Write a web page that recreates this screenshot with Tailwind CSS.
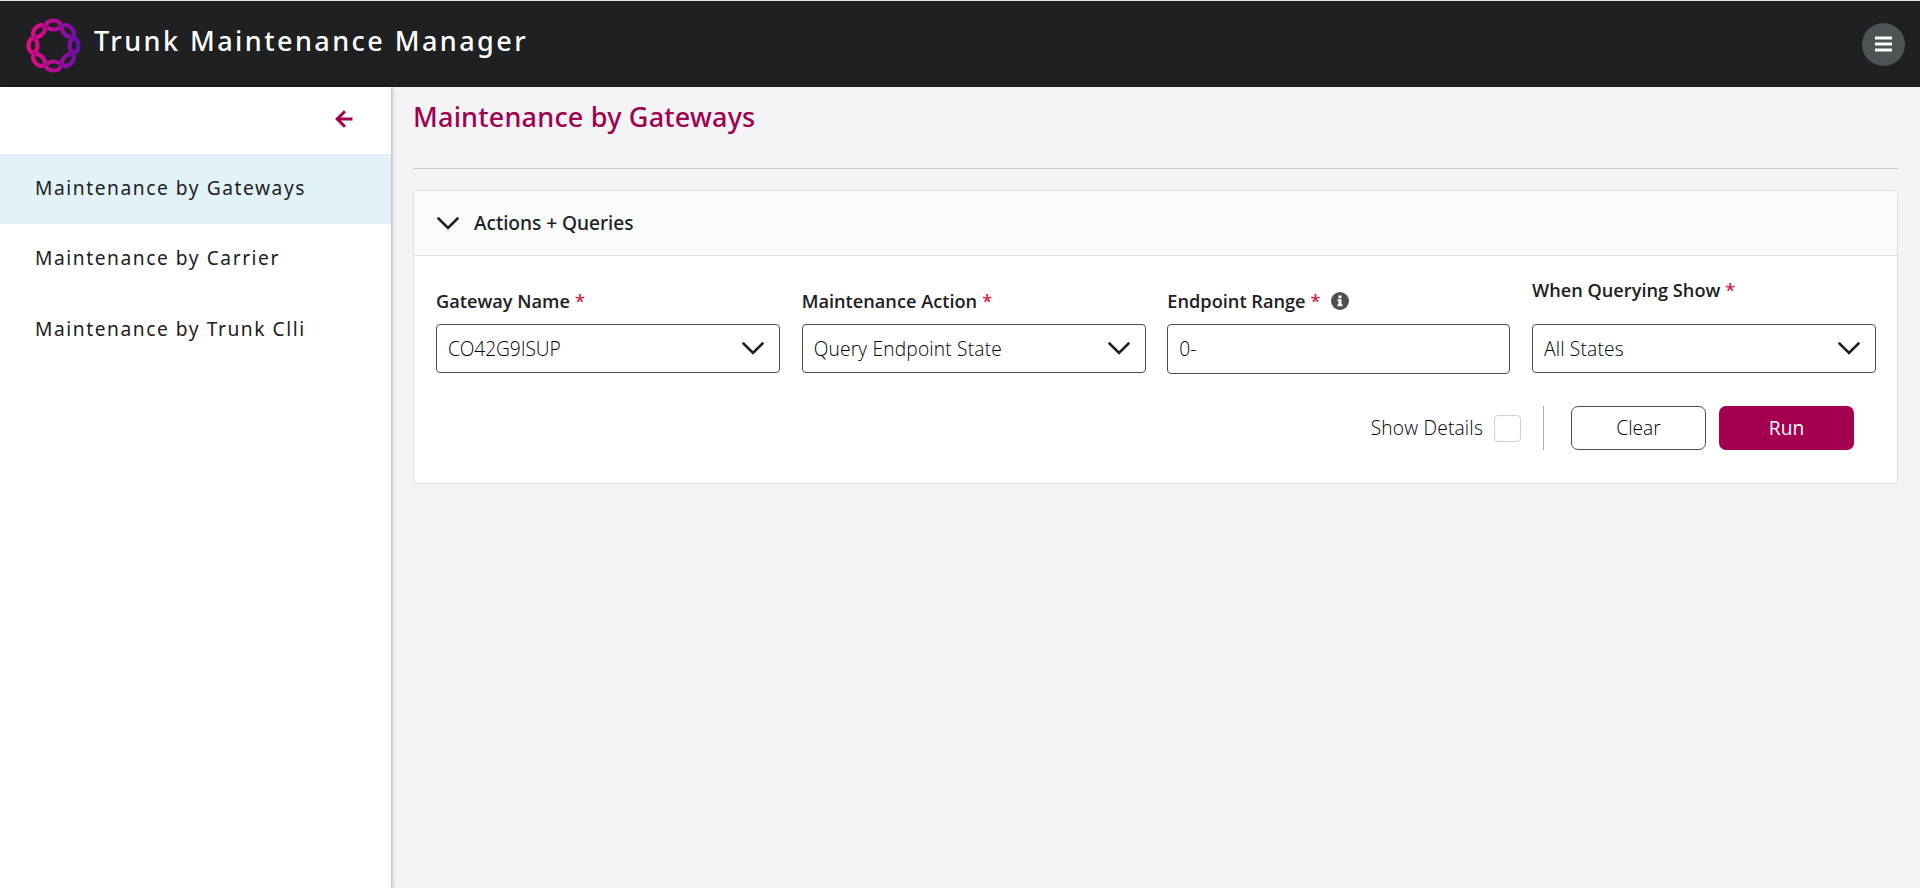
<!DOCTYPE html>
<html lang="en">
<head>
<meta charset="utf-8">
<title>Trunk Maintenance Manager</title>
<script src="https://cdn.jsdelivr.net/npm/@tailwindcss/browser@4"></script>
</head>
<body class="h-[888px] overflow-hidden bg-[#f4f4f7] font-['Open_Sans','Noto_Sans',sans-serif] text-[#1e2022] flex flex-col">
<header class="h-[87px] shrink-0 border-t border-[#dfe6e3] bg-[#1e2022] flex items-center justify-between pl-[26px] pr-[15px]">
  <div class="flex items-center gap-[13px]">
    <svg class="size-[55px] mt-[3px]" viewBox="-27.5 -27.5 55 55" fill="none">
      <defs>
        <linearGradient id="ring" gradientUnits="userSpaceOnUse" x1="-27" y1="0" x2="27" y2="0"><stop offset="0" stop-color="#e80b80"/><stop offset=".5" stop-color="#b80c96"/><stop offset="1" stop-color="#5f0fae"/></linearGradient>
        <mask id="m" maskUnits="userSpaceOnUse" x="-28" y="-28" width="56" height="56"><g stroke="#fff" stroke-width="4.200">
          <ellipse cy="-20.5" rx="7.200" ry="4.500"/><ellipse cy="-20.5" rx="7.200" ry="4.500" transform="rotate(45)"/><ellipse cy="-20.5" rx="7.200" ry="4.500" transform="rotate(90)"/><ellipse cy="-20.5" rx="7.200" ry="4.500" transform="rotate(135)"/><ellipse cy="-20.5" rx="7.200" ry="4.500" transform="rotate(180)"/><ellipse cy="-20.5" rx="7.200" ry="4.500" transform="rotate(225)"/><ellipse cy="-20.5" rx="7.200" ry="4.500" transform="rotate(270)"/><ellipse cy="-20.5" rx="7.200" ry="4.500" transform="rotate(315)"/></g></mask>
      </defs>
      <rect x="-28" y="-28" width="56" height="56" fill="url(#ring)" mask="url(#m)"/>
      <g fill="#50106f" fill-opacity=".35"><circle cx="7.7" cy="-18.6" r="2.2"/><circle cx="18.6" cy="-7.7" r="2.2"/><circle cx="18.6" cy="7.7" r="2.2"/><circle cx="7.7" cy="18.6" r="2.2"/><circle cx="-7.7" cy="18.6" r="2.2"/><circle cx="-18.6" cy="7.7" r="2.2"/><circle cx="-18.6" cy="-7.7" r="2.2"/><circle cx="-7.7" cy="-18.6" r="2.2"/></g>
    </svg>
    <h1 class="-mt-[7px] font-['Noto_Sans'] text-[27px] leading-9 font-medium tracking-[2.45px] text-white whitespace-nowrap">Trunk Maintenance Manager</h1>
  </div>
  <button class="size-[43px] rounded-full bg-[#4e5355] flex items-center justify-center">
    <svg class="w-[17px] h-[16px]" viewBox="0 0 17 16" fill="#fff"><rect y=".4" width="17" height="3.200" rx=".5"/><rect y="6.400" width="17" height="3.200" rx=".5"/><rect y="12.400" width="17" height="3.200" rx=".5"/></svg>
  </button>
</header>
<div class="flex flex-1">
  <aside class="w-[391px] shrink-0 bg-white shadow-[1px_0_4px_rgba(0,0,0,0.3)] font-['Noto_Sans'] text-[19.2px] tracking-[1.55px]">
    <div class="h-[67px] flex items-center justify-end pr-[38px]">
      <svg class="w-[18px] h-[18px] mt-[-3px]" viewBox="0 0 18 18" fill="none" stroke="#a3004f" stroke-width="3"><path d="M17.5 9H3M10 1.3 2.2 9 10 16.700"/></svg>
    </div>
    <nav class="flex flex-col whitespace-nowrap">
      <a class="h-[70px] flex items-center pl-[35px] pb-[1px] bg-[#e1f2f9]">Maintenance by Gateways</a>
      <a class="h-[70px] flex items-center pl-[35px] pb-[1px]">Maintenance by Carrier</a>
      <a class="h-[71px] flex items-center pl-[35px]">Maintenance by Trunk Clli</a>
    </nav>
  </aside>
  <main class="flex-1 pl-[22px] pr-[22px]">
    <div class="h-[82px] border-b border-[#c9cacc] pt-[10px]">
      <h2 class="font-['Noto_Sans'] text-[27px] leading-10 font-medium tracking-[0.2px] text-[#9f0050] whitespace-nowrap">Maintenance by Gateways</h2>
    </div>
    <section class="mt-[21px] h-[294px] rounded border border-[#dfe0e2] bg-white overflow-hidden">
      <div class="h-[65px] border-b border-[#dfe0e2] bg-[#f9fafc] flex items-center pl-[23px] gap-[15px]">
        <svg class="w-[22px] h-[13px]" viewBox="0 0 22 13" fill="none" stroke="#1e2022" stroke-width="2.600" stroke-linecap="round"><path d="M1.500 1.500 11 11 20.500 1.500"/></svg>
        <span class="font-['Noto_Sans'] text-[19.2px] font-medium tracking-[-0.05px] whitespace-nowrap">Actions + Queries</span>
      </div>
      <div class="pl-[22px] pr-[21px] grid grid-cols-[344px_344px_343px_344px] justify-between h-[119px] text-[19.2px]">
        <div class="pt-[31px]"><div class="h-[37px] flex gap-[5px] text-[18.2px] leading-7 font-semibold whitespace-nowrap">Gateway Name <span class="text-[#cf1f45]">*</span></div>
          <div class="h-[49px] rounded border border-[#4b4f51] flex items-center justify-between pl-[11px] pr-[15px] font-light text-black"><span class="pt-[2px] tracking-[-0.1px]">CO42G9ISUP</span><svg class="w-[22px] h-[13px]" viewBox="0 0 22 13" fill="none" stroke="#1e2022" stroke-width="2.600" stroke-linecap="round"><path d="M1.500 1.500 11 11 20.500 1.500"/></svg></div></div>
        <div class="pt-[31px]"><div class="h-[37px] flex gap-[5px] text-[18.2px] leading-7 font-semibold whitespace-nowrap">Maintenance Action <span class="text-[#cf1f45]">*</span></div>
          <div class="h-[49px] rounded border border-[#4b4f51] flex items-center justify-between pl-[11px] pr-[15px] font-light text-black"><span class="pt-[2px] tracking-[0.17px]">Query Endpoint State</span><svg class="w-[22px] h-[13px]" viewBox="0 0 22 13" fill="none" stroke="#1e2022" stroke-width="2.600" stroke-linecap="round"><path d="M1.500 1.500 11 11 20.500 1.500"/></svg></div></div>
        <div class="pt-[31px]"><div class="h-[37px] flex gap-[5px] text-[18.2px] leading-7 font-semibold whitespace-nowrap">Endpoint Range <span class="text-[#cf1f45]">*</span>
            <svg class="ml-[5px] mt-[5px] size-[18px]" viewBox="0 0 18 18"><circle cx="9" cy="9" r="9" fill="#4b5053"/><path fill="#fff" d="M7.500 3.500h3v2.700h-3zM6.500 7.300h4v4.900h1v2h-5v-2h1V9.300h-1z"/></svg></div>
          <div class="h-[50px] rounded border border-[#4b4f51] flex items-center pl-[11px] pt-px font-light text-black">0-</div></div>
        <div class="pt-[20px]"><div class="h-[48px] flex gap-[5px] text-[18.2px] leading-7 font-semibold whitespace-nowrap">When Querying Show <span class="text-[#cf1f45]">*</span></div>
          <div class="h-[49px] rounded border border-[#4b4f51] flex items-center justify-between pl-[11px] pr-[15px] font-light text-black"><span class="pt-[2px] tracking-[0.17px]">All States</span><svg class="w-[22px] h-[13px]" viewBox="0 0 22 13" fill="none" stroke="#1e2022" stroke-width="2.600" stroke-linecap="round"><path d="M1.500 1.500 11 11 20.500 1.500"/></svg></div></div>
      </div>
      <div class="mt-[31px] h-[44px] flex items-center justify-end pr-[43px] text-[19.2px] font-light text-black">
        <span class="tracking-[0.18px]">Show Details</span>
        <span class="ml-[11px] size-[27px] rounded border border-[#cfd0d2]"></span>
        <span class="ml-[22px] h-[44px] w-px bg-[#a9abad]"></span>
        <button class="ml-[27px] w-[135px] h-[44px] rounded-[7px] border border-[#4b4f51]">Clear</button>
        <button class="ml-[13px] w-[135px] h-[44px] rounded-[7px] bg-[#a3004f] text-white font-normal">Run</button>
      </div>
    </section>
  </main>
</div>
</body>
</html>
